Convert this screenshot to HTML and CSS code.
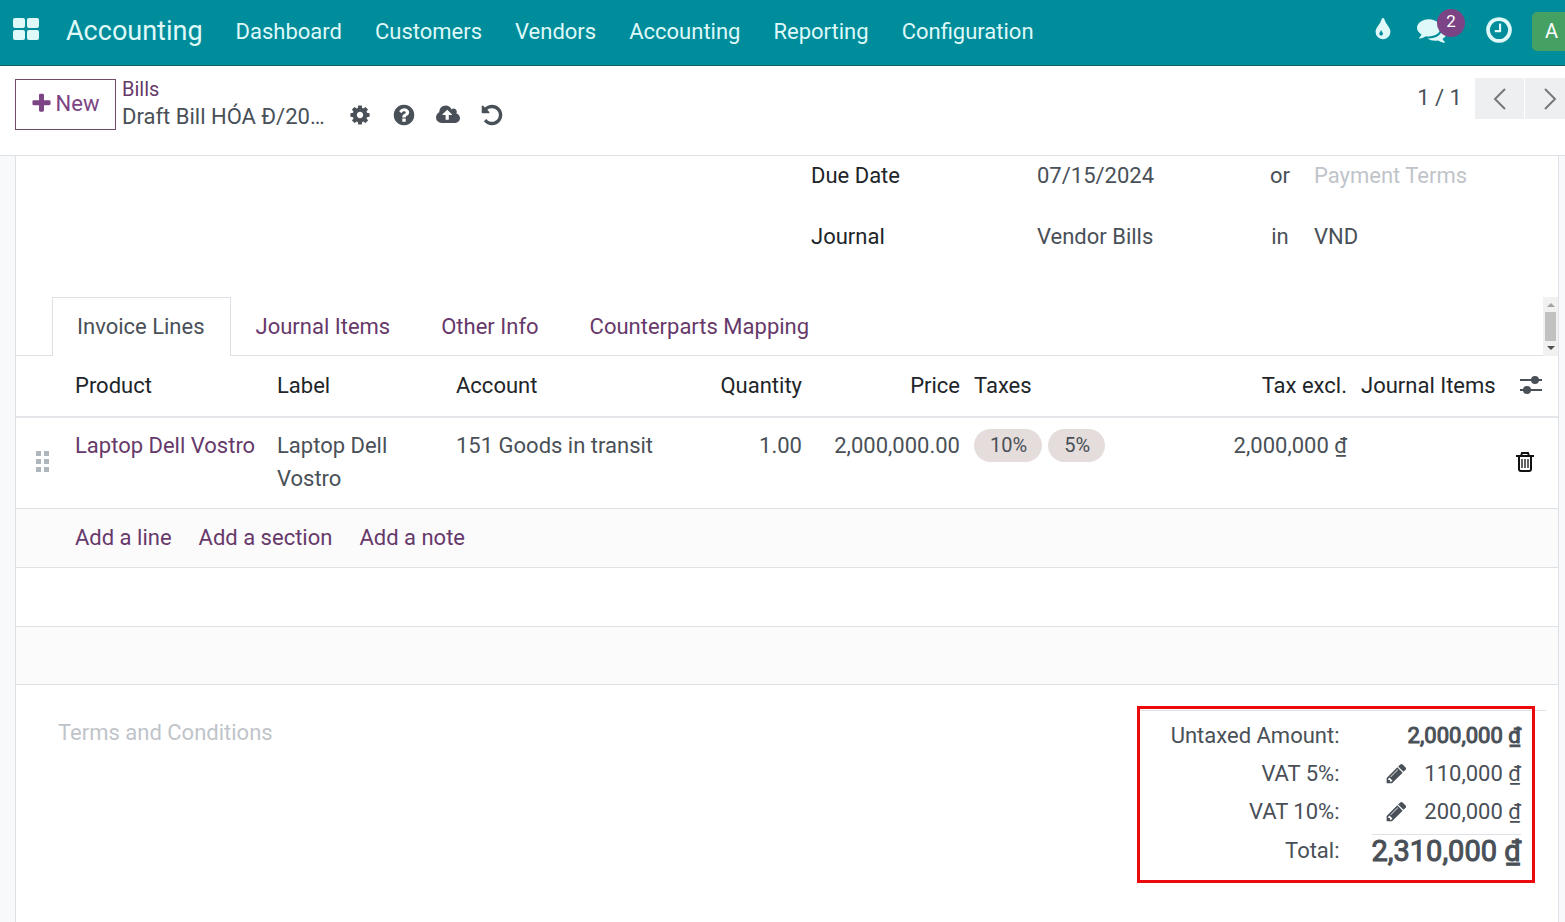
FILE: index.html
```html
<!DOCTYPE html>
<html lang="en">
<head>
  <meta charset="UTF-8">
  <meta name="viewport" content="width=device-width, initial-scale=1.0">
  <title>Draft Bill - Accounting</title>
  <link rel="stylesheet" href="styles.css">
</head>
<body>
  <!-- Main navbar -->
  <header class="navbar">
    <button class="apps_btn" aria-label="Home menu">
      <svg width="26" height="22" viewBox="0 0 26 22" fill="currentColor"><rect width="12" height="10" rx="2"/><rect x="14" width="12" height="10" rx="2"/><rect y="12" width="12" height="10" rx="2"/><rect x="14" y="12" width="12" height="10" rx="2"/></svg>
    </button>
    <a class="brand" href="#">Accounting</a>
    <nav class="menu">
      <a href="#">Dashboard</a>
      <a href="#">Customers</a>
      <a href="#">Vendors</a>
      <a href="#">Accounting</a>
      <a href="#">Reporting</a>
      <a href="#">Configuration</a>
    </nav>
    <div class="systray">
      <button class="tray_btn" aria-label="Theme">
        <svg width="26" height="28" viewBox="0 0 1792 1792" fill="currentColor"><path d="M896 1152q0-36-20-69-1-1-15.500-22.500t-25.500-38-25-44-21-50.500q-4-16-21-16t-21 16q-7 23-21 50.500t-25 44-25.500 38-15.500 22.500q-20 33-20 69 0 53 37.500 90.500t90.500 37.500 90.500-37.500 37.500-90.500zm512-128q0 212-150 362t-362 150-362-150-150-362q0-145 81-275 6-9 62.500-90.500t101-151 99.500-178 83-201.500q9-30 34-47t51-17 51.500 17 33.500 47q28 93 83 201.500t99.500 178 101 151 62.500 90.500q81 127 81 275z"/></svg>
      </button>
      <button class="tray_btn tray_chat" aria-label="Messages">
        <svg width="30" height="30" viewBox="0 0 1792 1792" fill="currentColor"><path d="M1408 768q0 139-94 257t-256.500 186.500-353.500 68.500q-86 0-176-16-124 88-278 128-36 9-86 16h-3q-11 0-20.500-8t-11.500-21q-1-3-1-6.500t.5-6.500 2-6l2.500-5 3.500-5.500 4-5 4.500-5 4-4.500q5-6 23-25t26-29.500 22.500-29 25-38.500 20.500-44q-124-72-195-177t-71-224q0-139 94-257t256.500-186.500 353.500-68.500 353.500 68.500 256.500 186.500 94 257zm384 256q0 120-71 224.500t-195 176.500q10 24 20.500 44t25 38.500 22.500 29 26 29.500 23 25q1 1 4 4.500t4.500 5 4 5 3.500 5.500l2.500 5 2 6 .5 6.500-1 6.500q-3 14-13 22t-22 7q-50-7-86-16-154-40-278-128-90 16-176 16-271 0-472-132 58 4 88 4 161 0 309-45t264-129q125-92 192-212t67-254q0-77-23-152 129 71 204 178t75 230z"/></svg>
        <span class="badge">2</span>
      </button>
      <button class="tray_btn tray_clock" aria-label="Activities">
        <svg width="30" height="30" viewBox="0 0 1792 1792" fill="currentColor"><path d="M1024 544v448q0 14-9 23t-23 9h-320q-14 0-23-9t-9-23v-64q0-14 9-23t23-9h224v-352q0-14 9-23t23-9h64q14 0 23 9t9 23zm416 352q0-148-73-273t-198-198-273-73-273 73-198 198-73 273 73 273 198 198 273 73 273-73 198-198 73-273zm224 0q0 209-103 385.500t-279.500 279.500-385.500 103-385.500-103-279.500-279.500-103-385.500 103-385.500 279.500-279.500 385.500-103 385.500 103 279.500 279.500 103 385.500z"/></svg>
      </button>
      <button class="avatar">A</button>
    </div>
  </header>

  <!-- Control panel -->
  <div class="control_panel">
    <button class="new_btn">
      <svg width="23" height="23" viewBox="0 0 1792 1792" fill="currentColor"><path d="M1600 736v192q0 40-28 68t-68 28h-416v416q0 40-28 68t-68 28h-192q-40 0-68-28t-28-68v-416h-416q-40 0-68-28t-28-68v-192q0-40 28-68t68-28h416v-416q0-40 28-68t68-28h192q40 0 68 28t28 68v416h416q40 0 68 28t28 68z"/></svg>
      New
    </button>
    <div class="breadcrumb">
      <a href="#">Bills</a>
      <div class="current">
        <span class="current_name">Draft Bill HÓA Đ/20…</span>
        <button class="icon_btn" aria-label="Actions">
          <svg width="24" height="24" viewBox="-64 -64 1920 1920" fill="currentColor"><path d="M1152 896q0-106-75-181t-181-75-181 75-75 181 75 181 181 75 181-75 75-181zm512-109v222q0 12-8 23t-20 13l-185 28q-19 54-39 91 35 50 107 138 10 12 10 25t-9 23q-27 37-99 108t-94 71q-12 0-26-9l-138-108q-44 23-91 38-16 136-29 186-7 28-36 28h-222q-14 0-24.500-8.500t-11.500-21.500l-28-184q-49-16-90-37l-141 107q-10 9-25 9-14 0-25-11-126-114-165-168-7-10-7-23 0-12 8-23 15-21 51-66.500t54-70.500q-27-50-41-99l-183-27q-13-2-21-12.500t-8-23.500v-222q0-12 8-23t19-13l186-28q14-46 39-92-40-57-107-138-10-12-10-24 0-10 9-23 26-36 98.500-107.500t94.500-71.500q13 0 26 10l138 107q44-23 91-38 16-136 29-186 7-28 36-28h222q14 0 24.500 8.500t11.500 21.500l28 184q49 16 90 37l142-107q9-9 24-9 13 0 25 10 129 119 165 170 7 8 7 22 0 12-8 23-15 21-51 66.500t-54 70.500q26 50 41 98l183 28q13 2 21 12.500t8 23.500z"/></svg>
        </button>
        <button class="icon_btn" aria-label="Help">
          <svg width="24" height="24" viewBox="0 0 1792 1792" fill="currentColor"><path d="M1024 1376v-192q0-14-9-23t-23-9h-192q-14 0-23 9t-9 23v192q0 14 9 23t23 9h192q14 0 23-9t9-23zm256-672q0-88-55.500-163t-138.500-116-170-41q-243 0-371 213-15 24 8 42l132 100q7 6 19 6 16 0 25-12 53-68 86-92 34-24 86-24 48 0 85.500 26t37.500 59q0 38-20 61t-68 45q-63 28-115.500 86.500t-52.500 125.500v36q0 14 9 23t23 9h192q14 0 23-9t9-23q0-19 21.500-49.500t54.500-49.500q32-18 49-28.500t46-35 44.500-48 28-60.500 12.500-81zm384 192q0 209-103 385.500t-279.500 279.500-385.500 103-385.500-103-279.500-279.500-103-385.500 103-385.500 279.500-279.500 385.500-103 385.500 103 279.500 279.500 103 385.500z"/></svg>
        </button>
        <button class="icon_btn" aria-label="Save">
          <svg width="24" height="24" viewBox="-64 0 1920 1792" fill="currentColor"><path d="M1216 864q0-14-9-23l-352-352q-9-9-23-9t-23 9l-351 351q-10 12-10 24 0 14 9 23t23 9h224v352q0 13 9.500 22.500t22.500 9.500h192q13 0 22.500-9.500t9.500-22.500v-352h224q13 0 22.500-9.500t9.500-22.500zm640 288q0 159-112.500 271.500t-271.500 112.500h-1088q-185 0-316.500-131.500t-131.500-316.500q0-130 70-240t188-165q-2-30-2-43 0-212 150-362t362-150q156 0 285.500 87t188.500 231q71-62 166-62 106 0 181 75t75 181q0 76-41 138 130 31 213.500 135.500t83.500 238.500z"/></svg>
        </button>
        <button class="icon_btn" aria-label="Discard">
          <svg width="24" height="24" viewBox="0 0 1792 1792" fill="currentColor"><path d="M1664 896q0 156-61 298t-164 245-245 164-298 61q-172 0-327-72.500t-264-204.500q-7-10-6.500-22.500t8.500-20.500l137-138q10-9 25-9 16 2 23 12 73 95 179 147t225 52q104 0 198.500-40.500t163.500-109.500 109.500-163.500 40.500-198.500-40.500-198.500-109.500-163.500-163.500-109.500-198.500-40.500q-98 0-188 35.500t-160 101.500l137 138q31 30 14 69-17 40-59 40h-448q-26 0-45-19t-19-45v-448q0-42 40-59 39-17 69 14l130 129q107-101 244.500-156.500t284.500-55.500q156 0 298 61t245 164 164 245 61 298z"/></svg>
        </button>
      </div>
    </div>
    <div class="pager">
      <span class="pager_value">1 / 1</span>
      <button class="pager_btn" aria-label="Previous"><svg width="14" height="24" viewBox="0 0 14 24"><path d="M12 2L2 12l10 10"/></svg></button>
      <button class="pager_btn" aria-label="Next"><svg width="14" height="24" viewBox="0 0 14 24"><path d="M2 2l10 10L2 22"/></svg></button>
    </div>
  </div>

  <!-- Form sheet -->
  <main class="sheet">
    <div class="fields">
      <label for="due_date">Due Date</label>
      <input id="due_date" type="text" value="07/15/2024">
      <label class="sep" for="payment_terms">or</label>
      <input id="payment_terms" type="text" placeholder="Payment Terms">

      <label for="journal">Journal</label>
      <input id="journal" type="text" value="Vendor Bills">
      <label class="sep" for="currency">in</label>
      <input id="currency" type="text" value="VND">
    </div>

    <div class="tabs_wrap">
      <div class="tabs">
        <a class="tab active" href="#">Invoice Lines</a>
        <a class="tab" href="#">Journal Items</a>
        <a class="tab" href="#">Other Info</a>
        <a class="tab" href="#">Counterparts Mapping</a>
      </div>
      <div class="scrollbar">
        <span class="arrow_up"></span>
        <span class="thumb"></span>
        <span class="arrow_down"></span>
      </div>
    </div>

    <table class="lines">
      <colgroup>
        <col class="c_handle">
        <col class="c_product">
        <col class="c_label">
        <col class="c_account">
        <col class="c_quantity">
        <col class="c_price">
        <col class="c_taxes">
        <col class="c_subtotal">
        <col class="c_items">
        <col class="c_options">
      </colgroup>
      <thead>
        <tr>
          <th></th>
          <th>Product</th>
          <th>Label</th>
          <th>Account</th>
          <th class="num">Quantity</th>
          <th class="num">Price</th>
          <th>Taxes</th>
          <th class="num">Tax excl.</th>
          <th>Journal Items</th>
          <th class="options">
            <button class="icon_btn" aria-label="Optional columns">
              <svg width="24" height="20" viewBox="0 0 24 20"><path d="M1 5h22M1 15h22" stroke="currentColor" stroke-width="2"/><circle cx="16" cy="5" r="4" fill="currentColor"/><circle cx="8" cy="15" r="4" fill="currentColor"/></svg>
            </button>
          </th>
        </tr>
      </thead>
      <tbody>
        <tr class="line">
          <td class="handle">
            <svg width="14" height="22" viewBox="0 0 14 22" fill="#adb5bd"><rect width="5" height="5"/><rect x="8" width="5" height="5"/><rect y="8" width="5" height="5"/><rect x="8" y="8" width="5" height="5"/><rect y="16" width="5" height="5"/><rect x="8" y="16" width="5" height="5"/></svg>
          </td>
          <td><a href="#">Laptop Dell Vostro</a></td>
          <td>Laptop Dell Vostro</td>
          <td>151 Goods in transit</td>
          <td class="num">1.00</td>
          <td class="num">2,000,000.00</td>
          <td><div class="tags"><span class="tag">10%</span><span class="tag">5%</span></div></td>
          <td class="num">2,000,000 ₫</td>
          <td></td>
          <td class="trash">
            <button class="icon_btn" aria-label="Delete row">
              <svg width="18" height="20" viewBox="0 0 18 20" fill="none" stroke="#111" stroke-width="2"><path d="M0 4h18M5 4l1-3h6l1 3M3 4v13q0 2 2 2h8q2 0 2-2V4"/><path d="M6 7v9M9 7v9M12 7v9" stroke-width="1.300"/></svg>
            </button>
          </td>
        </tr>
        <tr class="add_row">
          <td></td>
          <td colspan="9">
            <div class="add_links">
              <a href="#">Add a line</a>
              <a href="#">Add a section</a>
              <a href="#">Add a note</a>
            </div>
          </td>
        </tr>
        <tr class="empty"><td colspan="10"></td></tr>
        <tr class="empty odd"><td colspan="10"></td></tr>
      </tbody>
    </table>

    <div class="sheet_footer">
      <textarea class="terms" aria-label="Terms and Conditions" placeholder="Terms and Conditions"></textarea>
      <div class="totals">
        <table class="totals_table">
          <tr>
            <th>Untaxed Amount:</th>
            <td class="strong">2,000,000 ₫</td>
          </tr>
          <tr>
            <th>VAT 5%:</th>
            <td>
              <div class="amount">
                <button class="icon_btn" aria-label="Edit VAT 5%"><svg width="23" height="23" viewBox="0 0 1792 1792" fill="currentColor"><path d="M491 1536l91-91-235-235-91 91v107h128v128h107zm523-928q0-22-22-22-10 0-17 7l-542 542q-7 7-7 17 0 22 22 22 10 0 17-7l542-542q7-7 7-17zm-54-192l416 416-832 832h-416v-416zm683 96q0 53-37 90l-166 166-416-416 166-165q36-38 90-38 53 0 91 38l235 234q37 39 37 91z"/></svg></button>
                110,000 ₫
              </div>
            </td>
          </tr>
          <tr class="last_tax">
            <th>VAT 10%:</th>
            <td>
              <div class="amount">
                <button class="icon_btn" aria-label="Edit VAT 10%"><svg width="23" height="23" viewBox="0 0 1792 1792" fill="currentColor"><path d="M491 1536l91-91-235-235-91 91v107h128v128h107zm523-928q0-22-22-22-10 0-17 7l-542 542q-7 7-7 17 0 22 22 22 10 0 17-7l542-542q7-7 7-17zm-54-192l416 416-832 832h-416v-416zm683 96q0 53-37 90l-166 166-416-416 166-165q36-38 90-38 53 0 91 38l235 234q37 39 37 91z"/></svg></button>
                200,000 ₫
              </div>
            </td>
          </tr>
          <tr class="total">
            <th>Total:</th>
            <td class="strong">2,310,000 ₫</td>
          </tr>
        </table>
        <div class="highlight"></div>
      </div>
    </div>
  </main>
</body>
</html>
```
FILE: styles.css
```css
* {
  box-sizing: border-box;
}
body {
  margin: 0;
  min-height: 100vh;
  display: flex;
  flex-direction: column;
  overflow: hidden;
  font-family: Roboto, "Noto Sans", sans-serif;
  font-size: 22px;
  line-height: 33px;
  color: #495057;
  background: #f8f9fa;
}
a {
  color: #66396a;
  text-decoration: none;
}
button {
  padding: 0;
  border: 0;
  font: inherit;
  color: inherit;
  background: transparent;
  cursor: pointer;
}
input,
textarea {
  width: 100%;
  min-width: 0;
  padding: 0;
  border: 0;
  outline: 0;
  font: inherit;
  color: inherit;
  background: transparent;
}
::placeholder {
  color: #bfc4ca;
  opacity: 1;
}
svg {
  display: block;
}

/* navbar */
.navbar {
  display: flex;
  align-items: center;
  height: 66px;
  padding: 0 0 2px 13px;
  border-bottom: 1px solid #0b5f66;
  background: #008d9b;
  color: #dff8f8;
}
.navbar a {
  color: inherit;
}
.apps_btn {
  margin-right: 27px;
  padding-bottom: 6px;
}
.brand {
  margin-right: 33px;
  font-size: 27px;
}
.menu {
  display: flex;
  gap: 33px;
}
.systray {
  display: flex;
  align-items: center;
  margin-left: auto;
  margin-right: -6px;
}
.tray_btn {
  position: relative;
  padding-bottom: 3px;
}
.tray_chat {
  margin-left: 21px;
}
.tray_clock {
  margin-left: 37px;
}
.badge {
  position: absolute;
  top: -6px;
  left: 20px;
  width: 28px;
  height: 28px;
  border-radius: 50%;
  background: #7c4484;
  color: #fff;
  font-size: 17px;
  line-height: 24px;
}
.avatar {
  width: 39px;
  height: 39px;
  margin-left: 18px;
  border-radius: 5px;
  background: #45a163;
  color: #fff;
  font-size: 20px;
}

/* control panel */
.control_panel {
  display: flex;
  align-items: flex-start;
  height: 90px;
  padding: 12px 0 0 15px;
  border-bottom: 1px solid #dee2e6;
  background: #fff;
}
.new_btn {
  display: flex;
  align-items: center;
  justify-content: center;
  gap: 3px;
  width: 101px;
  height: 51px;
  margin: 1px 6px 0 0;
  padding: 0 2px 2px 0;
  border: 1px solid #714b67;
  color: #7c4484;
}
.breadcrumb a {
  display: block;
  font-size: 20px;
  line-height: 22px;
}
.current {
  display: flex;
  align-items: center;
  gap: 20px;
}
.current_name {
  padding-right: 3px;
}
.current .icon_btn {
  padding-bottom: 4px;
}
.pager {
  display: flex;
  align-items: center;
  gap: 1px;
  margin-left: auto;
  margin-right: -9px;
}
.pager_value {
  margin-right: 12px;
  padding-bottom: 2px;
}
.pager_btn {
  display: flex;
  align-items: center;
  justify-content: center;
  width: 49px;
  height: 41px;
  background: #eeeff1;
}
.pager_btn path {
  fill: none;
  stroke: #777;
  stroke-width: 2;
}

/* sheet */
.sheet {
  flex: 1;
  margin: 0 6px 0 15px;
  border: solid #dee2e6;
  border-width: 0 1px;
  background: #fff;
}
.fields {
  display: grid;
  grid-template-columns: 226px 223px 40px 1fr;
  row-gap: 28px;
  width: 747px;
  margin-left: auto;
  padding: 3px 0 44px;
}
.fields label {
  color: #212529;
}
.fields .sep {
  color: inherit;
  text-align: center;
}
.fields .sep + input {
  padding-left: 14px;
}

.tabs_wrap {
  display: flex;
}
.tabs {
  flex: 1;
  display: flex;
  padding-left: 36px;
  box-shadow: inset 0 -1px #dee2e6;
}
.tab {
  height: 59px;
  padding: 12px 25px 12px 24px;
  border: 1px solid transparent;
  border-bottom: 0;
}
.tab.active {
  border-color: #dee2e6;
  background: #fff;
  color: #495057;
}
.scrollbar {
  display: flex;
  flex-direction: column;
  align-items: center;
  width: 15px;
  padding: 6px 2px;
  background: #f1f1f1;
}
.scrollbar .thumb {
  width: 11px;
  height: 29px;
  margin: 5px 0;
  background: #c1c1c1;
}
.arrow_up,
.arrow_down {
  border: 4px solid transparent;
  border-top-width: 0;
  border-bottom-color: #a3a3a3;
}
.arrow_down {
  border-width: 4px 4px 0;
  border-top-color: #505050;
}

/* invoice lines */
.lines {
  width: 100%;
  table-layout: fixed;
  border-collapse: separate;
  border-spacing: 0;
}
.c_handle { width: 52px; }
.c_product { width: 202px; }
.c_label { width: 179px; }
.c_account { width: 262px; }
.c_quantity { width: 98px; }
.c_price { width: 158px; }
.c_subtotal { width: 134px; }
.c_items { width: 153px; }
.c_options { width: 51px; }
.lines th,
.lines td {
  padding: 12px 7px;
  border-bottom: 1px solid #dee2e6;
  text-align: left;
  vertical-align: top;
  white-space: nowrap;
}
.lines th {
  height: 62px;
  padding-top: 13px;
  border-bottom-width: 2px;
  border-bottom-color: #e4e6e9;
  font-weight: 400;
  color: #212529;
}
.lines .line td {
  padding-top: 11px;
  padding-bottom: 13px;
}
.line td:nth-child(3) {
  white-space: normal;
}
.lines .num {
  text-align: right;
}
.lines .options,
.lines .handle,
.lines .trash {
  vertical-align: middle;
}
.lines .options {
  padding: 2px 12px 0;
  color: #495057;
}
.lines .handle {
  padding-left: 20px;
}
.lines .line .trash {
  padding: 12px 9px 10px;
}
.tags {
  display: flex;
  gap: 6px;
}
.tag {
  padding: 0 15px 0 16px;
  border-radius: 17px;
  background: #e5dddc;
  font-size: 20px;
}
.lines .add_row td {
  padding-bottom: 13px;
}
.add_row td,
.odd td {
  background: #fbfbfc;
}
.add_links {
  display: flex;
  gap: 27px;
}
.lines .empty td {
  height: 59px;
}
.lines .odd td {
  height: 58px;
}

/* terms and totals */
.sheet_footer {
  display: flex;
  justify-content: space-between;
  padding: 25px 12px 0 42px;
}
.terms {
  flex: 1;
  height: 120px;
  margin-top: 6px;
  resize: none;
}
.totals {
  position: relative;
  width: 406px;
  padding: 8px 25px 0 0;
  border-top: 1px solid #dee2e6;
}
.totals_table {
  margin-left: auto;
  border-spacing: 0;
}
.totals_table th,
.totals_table td {
  height: 38px;
  padding: 0;
  font-weight: 400;
  text-align: right;
  vertical-align: top;
  white-space: nowrap;
}
.totals_table th {
  padding-right: 32px;
}
.totals_table .last_tax td {
  height: 39px;
}
/* thickened regular face for the main amounts */
.totals_table .strong {
  -webkit-text-stroke: 1px currentColor;
}
.totals_table .total td {
  border-top: 1px solid #dee2e6;
  font-size: 29px;
}
.amount {
  display: flex;
  align-items: center;
  justify-content: flex-end;
  gap: 16px;
}
.highlight {
  position: absolute;
  top: -5px;
  left: -3px;
  right: 11px;
  height: 177px;
  border: 3px solid #ea0a0e;
  pointer-events: none;
}
```
